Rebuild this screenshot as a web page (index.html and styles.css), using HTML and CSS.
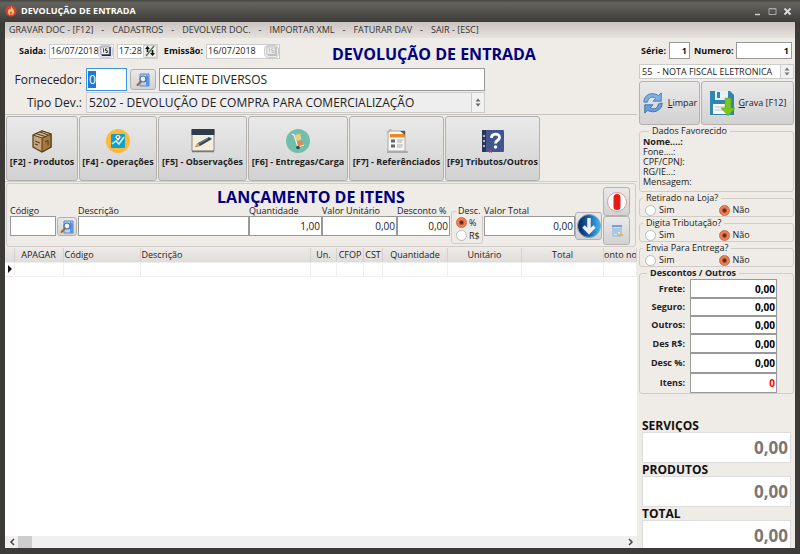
FILE: index.html
```html
<!DOCTYPE html>
<html lang="pt-BR">
<head>
    <meta charset="UTF-8">
    <meta name="viewport" content="width=device-width, initial-scale=1.0">
    <title>DEVOLUÇÃO DE ENTRADA</title>
    <link rel="stylesheet" href="styles.css">
</head>
<body>
    <!-- Shared icon -->
    <svg width="0" height="0" class="defs" aria-hidden="true">
        <symbol id="search-doc" viewBox="0 0 14 14">
            <path d="M4 1h9v12H4z" fill="#b9d4f2" stroke="#5b88c8"/>
            <path d="M10 1l3 3v9h-3z" fill="#5e93d6"/>
            <circle cx="7" cy="6" r="3" fill="#e8f4ff" stroke="#3f6fae" stroke-width="1.2"/>
            <path d="M5 8.400L1.500 12" stroke="#a8622c" stroke-width="2" stroke-linecap="round"/>
        </symbol>
    </svg>

    <div class="window">
        <header class="titlebar">
            <svg class="app-icon" viewBox="0 0 14 14">
                <circle cx="7" cy="7" r="6.500" fill="#c9453c"/>
                <path d="M7 1.500c.5 2 3.500 3 3.500 6.500a3.500 3.800 0 0 1-7 0C3.500 6.500 4.500 6 4.800 4.500c.8.500 1 1 1 1.500C6.500 5 7 3.500 7 1.500z" fill="#ffc65c"/>
                <path d="M7 7c1 1 1.600 1.600 1.600 2.700a1.600 1.600 0 0 1-3.200 0C5.400 8.600 6.400 8 7 7z" fill="#e8604a"/>
            </svg>
            <h1>DEVOLUÇÃO DE ENTRADA</h1>
            <div class="window-buttons">
                <button type="button" aria-label="Minimizar"><svg viewBox="0 0 9 9"><path d="M2 7.500h5" stroke="#ccc" stroke-width="1.500"/></svg></button>
                <button type="button" aria-label="Maximizar"><svg viewBox="0 0 9 9"><path d="M1 1.500h7v6H1z" fill="none" stroke="#aaa"/><path d="M1 1.800h7" stroke="#aaa"/></svg></button>
                <button type="button" aria-label="Fechar"><svg viewBox="0 0 9 9"><path d="M1.500 1.500l6 6m0-6l-6 6" stroke="#ddd" stroke-width="1.800"/></svg></button>
            </div>
        </header>

        <nav class="menubar">
            <a href="#">GRAVAR DOC - [F12]</a><span>-</span>
            <a href="#">CADASTROS</a><span>-</span>
            <a href="#">DEVOLVER DOC.</a><span>-</span>
            <a href="#">IMPORTAR XML</a><span>-</span>
            <a href="#">FATURAR DAV</a><span>-</span>
            <a href="#">SAIR - [ESC]</a>
        </nav>

        <div class="content">
            <main class="main">
                <section class="header-form">
                    <div class="dates">
                        <label for="saida">Saida:</label>
                        <div class="date-box">
                            <input type="text" id="saida" value="16/07/2018">
                            <button type="button" aria-label="Calendário"><svg viewBox="0 0 14 11"><path d="M2 1h9v8H2z" fill="#fff" stroke="#889"/><path d="M12 1v9H3" fill="none" stroke="#225" stroke-width="1.500"/><path d="M4 3h1v4M9 3H7v2h2v2H7" fill="none" stroke="#223"/></svg></button>
                        </div>
                        <div class="date-box time-box">
                            <input type="text" aria-label="Hora" value="17:28">
                            <button type="button" aria-label="Ajustar hora"><svg viewBox="0 0 12 12"><path d="M2 11L10 1" stroke="#587a50" stroke-width="1.500"/><path d="M3.500 1L6 4H4.300v3H2.700V4H1zM8.500 11L6 8h1.700V5h1.600v3H11z" fill="#111"/></svg></button>
                        </div>
                        <label for="emissao">Emissão:</label>
                        <div class="date-box emissao-box">
                            <input type="text" id="emissao" value="16/07/2018">
                            <button type="button" aria-label="Calendário de emissão" disabled><svg viewBox="0 0 14 11"><path d="M2 1h9v8H2z" fill="#eee" stroke="#bbb"/><path d="M12 1v9H3" fill="none" stroke="#bbb" stroke-width="1.500"/><path d="M4 3h1v4M9 3H7v2h2v2H7" fill="none" stroke="#bbb"/></svg></button>
                        </div>
                        <h2 class="page-title">DEVOLUÇÃO DE ENTRADA</h2>
                    </div>
                    <div class="form-row">
                        <label for="fornecedor">Fornecedor:</label>
                        <div class="code-box"><span class="selection"></span><input type="text" id="fornecedor" value="0"></div>
                        <button type="button" class="btn search-btn" aria-label="Buscar fornecedor"><svg><use href="#search-doc"/></svg></button>
                        <input type="text" class="supplier-name" aria-label="Nome do fornecedor" value="CLIENTE DIVERSOS">
                    </div>
                    <div class="form-row">
                        <label for="tipo">Tipo Dev.:</label>
                        <div class="select-box tipo-box">
                            <select id="tipo"><option>5202 - DEVOLUÇÃO DE COMPRA PARA COMERCIALIZAÇÃO</option></select>
                            <svg class="spin" viewBox="0 0 6 10"><path d="M3 1l2.500 3h-5zM3 9L.5 6h5z" fill="#666"/></svg>
                        </div>
                    </div>
                </section>

                <section class="toolbar">
                    <button type="button" class="btn">
                        <svg viewBox="0 0 24 24"><path d="M3 6l9-4 9 3v13l-9 5-9-5z" fill="#c9a27e" stroke="#5a4420" stroke-width="1.300"/><path d="M12 9l9-4v13l-9 5z" fill="#a67a3e" stroke="#4d3a18"/><path d="M3 6l9 3 9-4-9-3z" fill="#d9b48f" stroke="#5a4420"/><path d="M6 4.500l9 3M10 3l8 3M5 12l5 2M5 15l3 1M15 13l3-1.500v5" stroke="#4d3a18" fill="none"/></svg>
                        <span>[F2] - Produtos</span>
                    </button>
                    <button type="button" class="btn">
                        <svg viewBox="0 0 24 24"><circle cx="12" cy="12" r="12" fill="#fbb93b"/><rect x="5" y="5" width="14" height="14" rx="1" fill="#129fc9"/><path d="M6 15l4-3 3 3 5-7" fill="none" stroke="#d8f4fb" stroke-width="1.500"/><path d="M12 12L9.500 8.500a2.500 2.500 0 1 1 5 0z" fill="#fff"/><circle cx="12" cy="8" r="1.200" fill="#e8624a"/></svg>
                        <span>[F4] - Operações</span>
                    </button>
                    <button type="button" class="btn">
                        <svg viewBox="0 0 24 24"><path d="M1 1h22v21H1z" fill="#f6eedb" stroke="#888"/><path d="M1 22.500h22" stroke="#777" stroke-width="1.500"/><path d="M.5 0h23v6H.5z" fill="#2c3e4b"/><path d="M4 18l3-4L18 8l3 2L9 17z" fill="#35475a"/><path d="M4 18l3-4 2 3z" fill="#d8a568"/><path d="M8 14.500l9-5" stroke="#7690a7"/></svg>
                        <span>[F5] - Observações</span>
                    </button>
                    <button type="button" class="btn">
                        <svg viewBox="0 0 24 24"><circle cx="12" cy="12" r="12" fill="#71bfab"/><path d="M6 5l2 1 4 12" fill="none" stroke="#eee" stroke-width="1.300"/><path d="M9 6l5-1.500 1.500 6-5 1.500z" fill="#f5cb7b"/><path d="M11 13l5-1.500 1.500 5-5 1.500z" fill="#e8874b"/><path d="M12 18l6-2" stroke="#eee"/><circle cx="12" cy="18.500" r="1.800" fill="#34495e"/></svg>
                        <span>[F6] - Entregas/Carga</span>
                    </button>
                    <button type="button" class="btn">
                        <svg viewBox="0 0 24 24"><path d="M3 2h17v20H3z" fill="#f7f7f7" stroke="#aaa"/><path d="M2 22h21v2H2z" fill="#aaa"/><path d="M5 5h15v3.500H5z" fill="#e78b22"/><path d="M6 12h4M6 17h4" stroke="#666" stroke-width="3"/><path d="M12 11h6M12 13h5M12 16h6M12 18h5" stroke="#aaa"/><path d="M15 2l5 4V2z" fill="#555"/><path d="M1 5l4-5 2 1z" fill="#d8a568"/></svg>
                        <span>[F7] - Referênciados</span>
                    </button>
                    <button type="button" class="btn">
                        <svg viewBox="0 0 24 24"><rect x="1" y="1" width="22" height="22" rx="1" fill="#41558f"/><path d="M1 1h4v22H1z" fill="#2c3554"/><path d="M2 7h2M2 12h2M2 17h2" stroke="#dde" stroke-width="1.500"/><path d="M10.500 9c0-5 8-5 8-.5 0 3-4 2.500-4 6" fill="none" stroke="#fff" stroke-width="2.800"/><circle cx="14.500" cy="18" r="1.700" fill="#fff"/><path d="M8 21h3v3l-1.500-1L8 24z" fill="#c23b46"/></svg>
                        <span>[F9] Tributos/Outros</span>
                    </button>
                </section>

                <section class="items-panel">
                    <div class="items-form">
                        <h2 class="items-title">LANÇAMENTO DE ITENS</h2>
                        <div class="items-row">
                            <div class="field codigo"><label for="codigo">Código</label><input type="text" id="codigo"></div>
                            <button type="button" class="btn item-search" aria-label="Buscar produto"><svg><use href="#search-doc"/></svg></button>
                            <div class="field descricao"><label for="descricao">Descrição</label><input type="text" id="descricao"></div>
                            <div class="field quantidade"><label for="quantidade">Quantidade</label><input type="text" id="quantidade" value="1,00"></div>
                            <div class="field unitario"><label for="unitario">Valor Unitário</label><input type="text" id="unitario" value="0,00"></div>
                            <div class="field desconto"><label for="desconto">Desconto %</label><input type="text" id="desconto" value="0,00"></div>
                            <fieldset class="desc-type">
                                <legend>Desc.</legend>
                                <label><input type="radio" name="desc" checked>%</label>
                                <label><input type="radio" name="desc">R$</label>
                            </fieldset>
                            <div class="field total"><label for="total">Valor Total</label><input type="text" id="total" value="0,00"></div>
                            <button type="button" class="btn add-btn" aria-label="Adicionar item"><svg viewBox="0 0 24 24"><defs><linearGradient id="blue"><stop offset="0" stop-color="#0a2360"/><stop offset=".5" stop-color="#1b62a8"/><stop offset="1" stop-color="#39bdf0"/></linearGradient></defs><circle cx="12" cy="12" r="11.500" fill="url(#blue)" stroke="#8ba6bd"/><path d="M12 4v14M6.500 12.500L12 18l5.500-5.500" fill="none" stroke="#eee" stroke-width="3.500"/></svg></button>
                        </div>
                    </div>
                    <div class="items-side">
                        <button type="button" class="btn" aria-label="Cancelar item"><svg viewBox="0 0 20 20"><circle cx="10" cy="10" r="9.500" fill="#fff" stroke="#e79a92"/><rect x="6.500" y="2" width="7" height="16" rx="3.500" fill="#e31b1b"/></svg></button>
                        <button type="button" class="btn" aria-label="Listar itens"><svg viewBox="0 0 20 20"><path d="M6 5h8v10H6z" fill="#d3e5f7" stroke="#86aedb"/><path d="M5 4h10v2H5z" fill="#6ea2dc"/><path d="M7 8h6M7 10h6M7 12h4" stroke="#7ea9d8"/><path d="M10 13h6v2h-6z" fill="#e8b45a"/></svg></button>
                    </div>
                </section>

                <section class="grid">
                    <table>
                        <colgroup>
                            <col class="c-mark"><col class="c-apagar"><col class="c-codigo"><col class="c-descricao"><col class="c-un"><col class="c-cfop"><col class="c-cst"><col class="c-qtd"><col class="c-unit"><col class="c-total"><col class="c-last">
                        </colgroup>
                        <thead>
                            <tr>
                                <th></th><th>APAGAR</th><th class="left">Código</th><th class="left">Descrição</th><th>Un.</th><th>CFOP</th><th>CST</th><th>Quantidade</th><th>Unitário</th><th>Total</th><th>onto no</th>
                            </tr>
                        </thead>
                        <tbody>
                            <tr><td><svg class="row-mark" viewBox="0 0 4 8"><path d="M0 0l4 4-4 4z" fill="#111"/></svg></td><td></td><td></td><td></td><td></td><td></td><td></td><td></td><td></td><td></td><td></td></tr>
                        </tbody>
                    </table>
                    <div class="scrollbar">
                        <button type="button" aria-label="Rolar para a esquerda"><svg viewBox="0 0 6 8"><path d="M5 1L2 4l3 3" fill="none" stroke="#444" stroke-width="1.500"/></svg></button>
                        <div class="thumb"></div>
                        <button type="button" aria-label="Rolar para a direita"><svg viewBox="0 0 6 8"><path d="M1 1l3 3-3 3" fill="none" stroke="#444" stroke-width="1.500"/></svg></button>
                    </div>
                </section>
            </main>

            <aside class="sidebar">
                <div class="serie-row">
                    <label for="serie">Série:</label><input type="text" id="serie" value="1">
                    <label for="numero">Numero:</label><input type="text" id="numero" value="1">
                </div>
                <div class="select-box model-box">
                    <select aria-label="Modelo"><option>55 &nbsp;- NOTA FISCAL ELETRONICA</option></select>
                    <svg class="spin" viewBox="0 0 6 10"><path d="M3 1l2.500 3h-5zM3 9L.5 6h5z" fill="#777"/></svg>
                </div>
                <div class="actions">
                    <button type="button" class="btn limpar">
                        <svg viewBox="0 0 24 24"><path d="M2 11C2 3 11-1 18 4l3-3v9h-9l3-3c-4-3-8-1-9 4z" fill="#7fb0e4" stroke="#4274b4"/><path d="M22 12c0 8-9 12-16 8l-3 3v-9h9l-3 3c4 3 8 1 9-4z" fill="#6aa0da" stroke="#3c6cab"/></svg>
                        <span><u>L</u>impar</span>
                    </button>
                    <button type="button" class="btn grava">
                        <svg viewBox="0 0 26 26"><path d="M1 1h20l4 4v20H1z" fill="#2f86ae"/><path d="M6 1h13v9H6z" fill="#e6f2f8"/><path d="M8 2h3v6H8z" fill="#2f86ae"/><path d="M4 14h17v10H4z" fill="#fbfbfb"/><path d="M6 17h12M6 20h12" stroke="#bbb"/><path d="M16 8h6v10h4l-7 8-7-8h4z" fill="#7ac51f" stroke="#5da014" stroke-width=".5"/></svg>
                        <span><u>G</u>rava [F12]</span>
                    </button>
                </div>

                <fieldset class="group favorecido">
                    <legend>Dados Favorecido</legend>
                    <p><b>Nome....:</b></p>
                    <p>Fone....:</p>
                    <p>CPF/CPNJ:</p>
                    <p>RG/IE...:</p>
                    <p>Mensagem:</p>
                </fieldset>
                <fieldset class="group choice">
                    <legend>Retirado na Loja?</legend>
                    <div class="options">
                        <label><input type="radio" name="retirado">Sim</label>
                        <label><input type="radio" name="retirado" checked>Não</label>
                    </div>
                </fieldset>
                <fieldset class="group choice">
                    <legend>Digita Tributação?</legend>
                    <div class="options">
                        <label><input type="radio" name="digita">Sim</label>
                        <label><input type="radio" name="digita" checked>Não</label>
                    </div>
                </fieldset>
                <fieldset class="group choice">
                    <legend>Envia Para Entrega?</legend>
                    <div class="options">
                        <label><input type="radio" name="envia">Sim</label>
                        <label><input type="radio" name="envia" checked>Não</label>
                    </div>
                </fieldset>
                <fieldset class="group descontos">
                    <legend>Descontos / Outros</legend>
                    <div class="desc-grid">
                        <label for="frete">Frete:</label><input type="text" id="frete" value="0,00">
                        <label for="seguro">Seguro:</label><input type="text" id="seguro" value="0,00">
                        <label for="outros">Outros:</label><input type="text" id="outros" value="0,00">
                        <label for="desrs">Des R$:</label><input type="text" id="desrs" value="0,00">
                        <label for="descp">Desc %:</label><input type="text" id="descp" value="0,00">
                        <label for="itens">Itens:</label><input type="text" id="itens" class="red" value="0">
                    </div>
                </fieldset>

                <div class="totals">
                    <label for="servicos">SERVIÇOS</label><input type="text" id="servicos" value="0,00" readonly>
                    <label for="produtos">PRODUTOS</label><input type="text" id="produtos" value="0,00" readonly>
                    <label for="geral">TOTAL</label><input type="text" id="geral" value="0,00" readonly>
                </div>
            </aside>
        </div>
    </div>
</body>
</html>
```

FILE: styles.css
```css
* {
    box-sizing: border-box;
}
body {
    margin: 0;
    font-family: 'Open Sans', 'Noto Sans', sans-serif;
    font-size: 9px;
    line-height: 12px;
    color: #222;
}
h1, h2, p {
    margin: 0;
}
input, select, button {
    font: inherit;
    color: inherit;
    margin: 0;
    padding: 0;
    min-width: 0;
    border-radius: 0;
}
input[type="text"] {
    background: #fff;
    border: 1px solid #999;
}
.defs {
    position: absolute;
}
.window {
    display: flex;
    flex-direction: column;
    height: 100vh;
    border: 5px solid #3c3b37;
    border-top: 0;
    border-bottom-width: 6px;
    background: #efebe7;
}
.titlebar {
    display: flex;
    align-items: center;
    height: 22px;
    flex: none;
    margin: 0 -5px;
    padding: 0 8px 0 5px;
    background: linear-gradient(#45443f, #64635e 3px, #3c3b37);
    color: #fff;
}
.titlebar h1 {
    flex: 1;
    font-size: 9px;
    font-weight: bold;
}
.app-icon {
    width: 12px;
    height: 12px;
    margin-right: 4px;
}
.window-buttons {
    display: flex;
    gap: 6px;
}
.window-buttons button {
    display: flex;
    width: 9px;
    height: 9px;
    border: 0;
    background: none;
}
.menubar {
    display: flex;
    flex: none;
    gap: 8px;
    height: 16px;
    padding: 0 4px;
    line-height: 15px;
    background: linear-gradient(#c9c4c1, #e7e2de);
}
.menubar a {
    color: #333;
    text-decoration: none;
}
.content {
    display: grid;
    grid-template-columns: 1fr 158px;
    flex: 1;
    min-height: 0;
}
.main {
    display: flex;
    flex-direction: column;
    min-width: 0;
}

/* Buttons */
.btn {
    display: flex;
    align-items: center;
    justify-content: center;
    border: 1px solid #b4b1ae;
    border-radius: 3px;
    background: linear-gradient(#e9e9e9, #d2d2d2);
}
.search-btn svg, .item-search svg {
    width: 14px;
    height: 14px;
}

/* Header form */
.dates {
    display: flex;
    align-items: center;
    height: 26px;
    padding-left: 14px;
}
.dates label {
    font-weight: bold;
    color: #111;
}
.date-box {
    display: flex;
    width: 65px;
    height: 15px;
    margin-left: 3px;
    border: 1px solid #ccc;
    background: #fff;
}
.date-box input[type="text"] {
    flex: 1;
    width: 0;
    padding-left: 1px;
    border: 0;
}
.date-box button {
    display: flex;
    align-items: center;
    width: 15px;
    border: 1px solid #ccc;
    border-radius: 4px;
    background: #eee;
}
.time-box {
    width: 41px;
    margin-right: 6px;
}
.time-box button {
    width: 14px;
    border-radius: 1px;
}
.page-title, .items-title {
    font-size: 16px;
    line-height: 18px;
    font-weight: bold;
    color: #000080;
}
.emissao-box {
    width: 74px;
}
.page-title {
    margin-left: 52px;
    padding-top: 6px;
}
.form-row {
    display: flex;
    align-items: center;
    height: 23px;
    padding-right: 152px;
    font-size: 12px;
    line-height: 19px;
}
.form-row:nth-child(2) {
    margin-top: 4px;
}
.form-row label {
    width: 77px;
    margin-right: 4px;
    text-align: right;
}
.form-row input[type="text"] {
    height: 23px;
    padding: 0 2px;
}
/* input stays transparent so the selection shows through */
.code-box {
    position: relative;
    width: 41px;
    background: #fff;
}
.code-box input[type="text"] {
    position: relative;
    display: block;
    width: 100%;
    border: 1px solid #3c96e0;
    color: #fff;
    background: none;
}
.selection {
    position: absolute;
    left: 2px;
    top: 3px;
    width: 8px;
    height: 17px;
    background: #1a7ad4;
}
.search-btn {
    width: 26px;
    height: 21px;
    margin: 0 3px;
}
.supplier-name {
    flex: 1;
}
.select-box {
    position: relative;
    display: flex;
    border: 1px solid #ccc;
    background: #eee;
}
.select-box select {
    flex: 1;
    appearance: none;
    border: 0;
    background: none;
    padding: 0 2px;
}
.spin {
    width: 13px;
    height: 100%;
    padding: 0 3px;
    border-left: 1px solid #ccc;
    background: #f2f2f2;
}
.tipo-box {
    flex: 1;
    height: 21px;
}

/* Toolbar */
.toolbar {
    display: flex;
    gap: 1px;
    padding: 1px 1px 0;
    border-top: 1px solid #c6c2be;
    border-bottom: 1px solid #d0ccc8;
}
.toolbar .btn {
    flex-direction: column;
    gap: 3px;
    width: 95px;
    height: 65px;
    font-weight: bold;
    white-space: nowrap;
    color: #222;
}
.toolbar .btn:first-child {
    width: 72px;
}
.toolbar .btn:nth-child(2) {
    width: 78px;
}
.toolbar .btn:nth-child(3) {
    width: 89px;
}
.toolbar .btn:nth-child(4) {
    width: 100px;
}
.toolbar .btn svg {
    width: 24px;
    height: 24px;
}

/* Item entry */
.items-panel {
    display: flex;
    height: 64px;
    margin: 1px;
    border: 1px solid #d0ccc8;
    border-radius: 3px;
}
.items-form {
    flex: 1;
    padding: 4px 1px 0 3px;
}
.items-title {
    padding-left: 10px;
    text-align: center;
}
.items-row {
    display: flex;
    align-items: flex-end;
    height: 30px;
}
.field {
    display: flex;
    flex-direction: column;
}
.field label {
    line-height: 10px;
    white-space: nowrap;
}
.field input[type="text"] {
    width: 100%;
    height: 20px;
    padding: 0 1px;
    font-size: 10px;
    text-align: right;
}
.codigo {
    width: 46px;
}
.item-search {
    width: 20px;
    height: 19px;
    margin: 0 1px;
}
.descricao {
    flex: 1;
}
.quantidade {
    width: 73px;
}
.unitario {
    width: 75px;
}
.desconto {
    width: 53px;
}
.desc-type {
    width: 32px;
    height: 38px;
    min-width: 0;
    margin: 0 1px -8px;
    padding: 0 0 0 4px;
    border: 1px solid #d0ccc8;
    border-radius: 3px;
}
.desc-type legend {
    line-height: 10px;
}
.desc-type label {
    display: flex;
    align-items: center;
    gap: 2px;
    height: 13px;
}
.total {
    width: 91px;
}
.add-btn {
    width: 27px;
    height: 28px;
    margin-bottom: -4px;
}
.add-btn svg {
    flex: none;
    width: 24px;
    height: 24px;
}
.items-side {
    width: 32px;
    padding: 3px 0;
}
.items-side .btn {
    width: 27px;
    height: 29px;
}
.items-side svg {
    flex: none;
    width: 20px;
    height: 20px;
}

/* Radios */
input[type="radio"] {
    appearance: none;
    flex: none;
    width: 11px;
    height: 11px;
    border: 1px solid #bbb;
    border-radius: 50%;
    background: #fff;
}
input[type="radio"]:checked {
    border-color: #cf6b45;
    background: radial-gradient(#5c2a18 1px, #ee7b51 3px);
}

/* Items table */
.grid {
    display: flex;
    flex-direction: column;
    flex: 1;
    min-height: 0;
    background: #fff;
}
table {
    width: 100%;
    table-layout: fixed;
    border-collapse: collapse;
}
th, td {
    height: 14px;
    padding: 0;
    overflow: hidden;
    white-space: nowrap;
    border-right: 1px solid #eee;
    border-bottom: 1px solid #eee;
}
th {
    font-weight: normal;
    background: linear-gradient(#ece9e6, #dfdddb);
    border-right-color: #d4d2d0;
}
th.left {
    text-align: left;
    padding-left: 1px;
}
.c-mark {
    width: 9px;
}
.c-apagar {
    width: 49px;
}
.c-codigo {
    width: 77px;
}
.c-un {
    width: 26px;
}
.c-cfop {
    width: 27px;
}
.c-cst {
    width: 19px;
}
.c-qtd {
    width: 65px;
}
.c-unit {
    width: 74px;
}
.c-total {
    width: 82px;
}
.c-last {
    width: 33px;
}
.row-mark {
    display: block;
    width: 4px;
    height: 8px;
    margin-left: 3px;
}
.scrollbar {
    display: flex;
    height: 12px;
    margin-top: auto;
    background: #f0f0f0;
}
.scrollbar button {
    display: flex;
    align-items: center;
    justify-content: center;
    width: 13px;
    border: 0;
    background: none;
}
.scrollbar svg {
    width: 6px;
    height: 8px;
}
.thumb {
    width: 14px;
    margin-right: auto;
    background: #cdcdcd;
}

/* Sidebar */
.sidebar {
    display: flex;
    flex-direction: column;
    min-height: 0;
    padding: 4px 1px 0 2px;
    overflow: hidden;
}
.serie-row {
    display: flex;
    align-items: center;
    height: 17px;
    padding: 0 2px;
    font-weight: bold;
    color: #111;
}
.serie-row input[type="text"] {
    height: 17px;
    padding-right: 2px;
    text-align: right;
}
#serie {
    width: 21px;
    margin: 0 4px 0 3px;
}
#numero {
    flex: 1;
    margin-left: 2px;
}
.model-box {
    height: 15px;
    margin: 5px 0 2px;
    background: #fff;
}
.actions {
    display: flex;
    gap: 1px;
}
.actions .btn {
    gap: 4px;
    height: 44px;
    white-space: nowrap;
}
.limpar {
    width: 61px;
}
.grava {
    flex: 1;
}
.limpar svg {
    width: 22px;
    height: 22px;
}
.grava svg {
    width: 26px;
    height: 26px;
}
.group {
    min-width: 0;
    margin: 0;
    padding: 0 3px;
    border: 1px solid #d0ccc8;
    border-radius: 3px;
}
.group legend {
    padding: 0 3px;
    line-height: 12px;
}
.favorecido {
    padding-bottom: 4px;
}
.favorecido legend {
    margin-left: 6px;
}
.favorecido p {
    line-height: 10px;
}
.options {
    display: grid;
    grid-template-columns: 1fr 1fr;
    height: 12px;
}
.options label {
    display: flex;
    align-items: center;
    gap: 3px;
    padding-left: 2px;
}
.descontos {
    padding: 0;
}
.descontos legend {
    margin-left: 7px;
    font-weight: bold;
}
.desc-grid {
    display: grid;
    grid-template-columns: 45px 87px;
    grid-template-rows: 19px 18px 18px 19px 20px 20px;
    column-gap: 5px;
    align-items: center;
    font-weight: bold;
    text-align: right;
}
.desc-grid input[type="text"] {
    height: 100%;
    padding-right: 1px;
    font-size: 10px;
    text-align: right;
    color: #000;
}
.desc-grid input.red[type="text"] {
    color: #f00;
}
.totals {
    display: flex;
    flex-direction: column;
    margin: auto 3px -3px;
    font-size: 12px;
    line-height: 13px;
    font-weight: bold;
    color: #111;
}
.totals input[type="text"] {
    height: 31px;
    padding-right: 2px;
    border-color: #ddd;
    font-size: 17px;
    text-align: right;
    color: #777;
}
```
